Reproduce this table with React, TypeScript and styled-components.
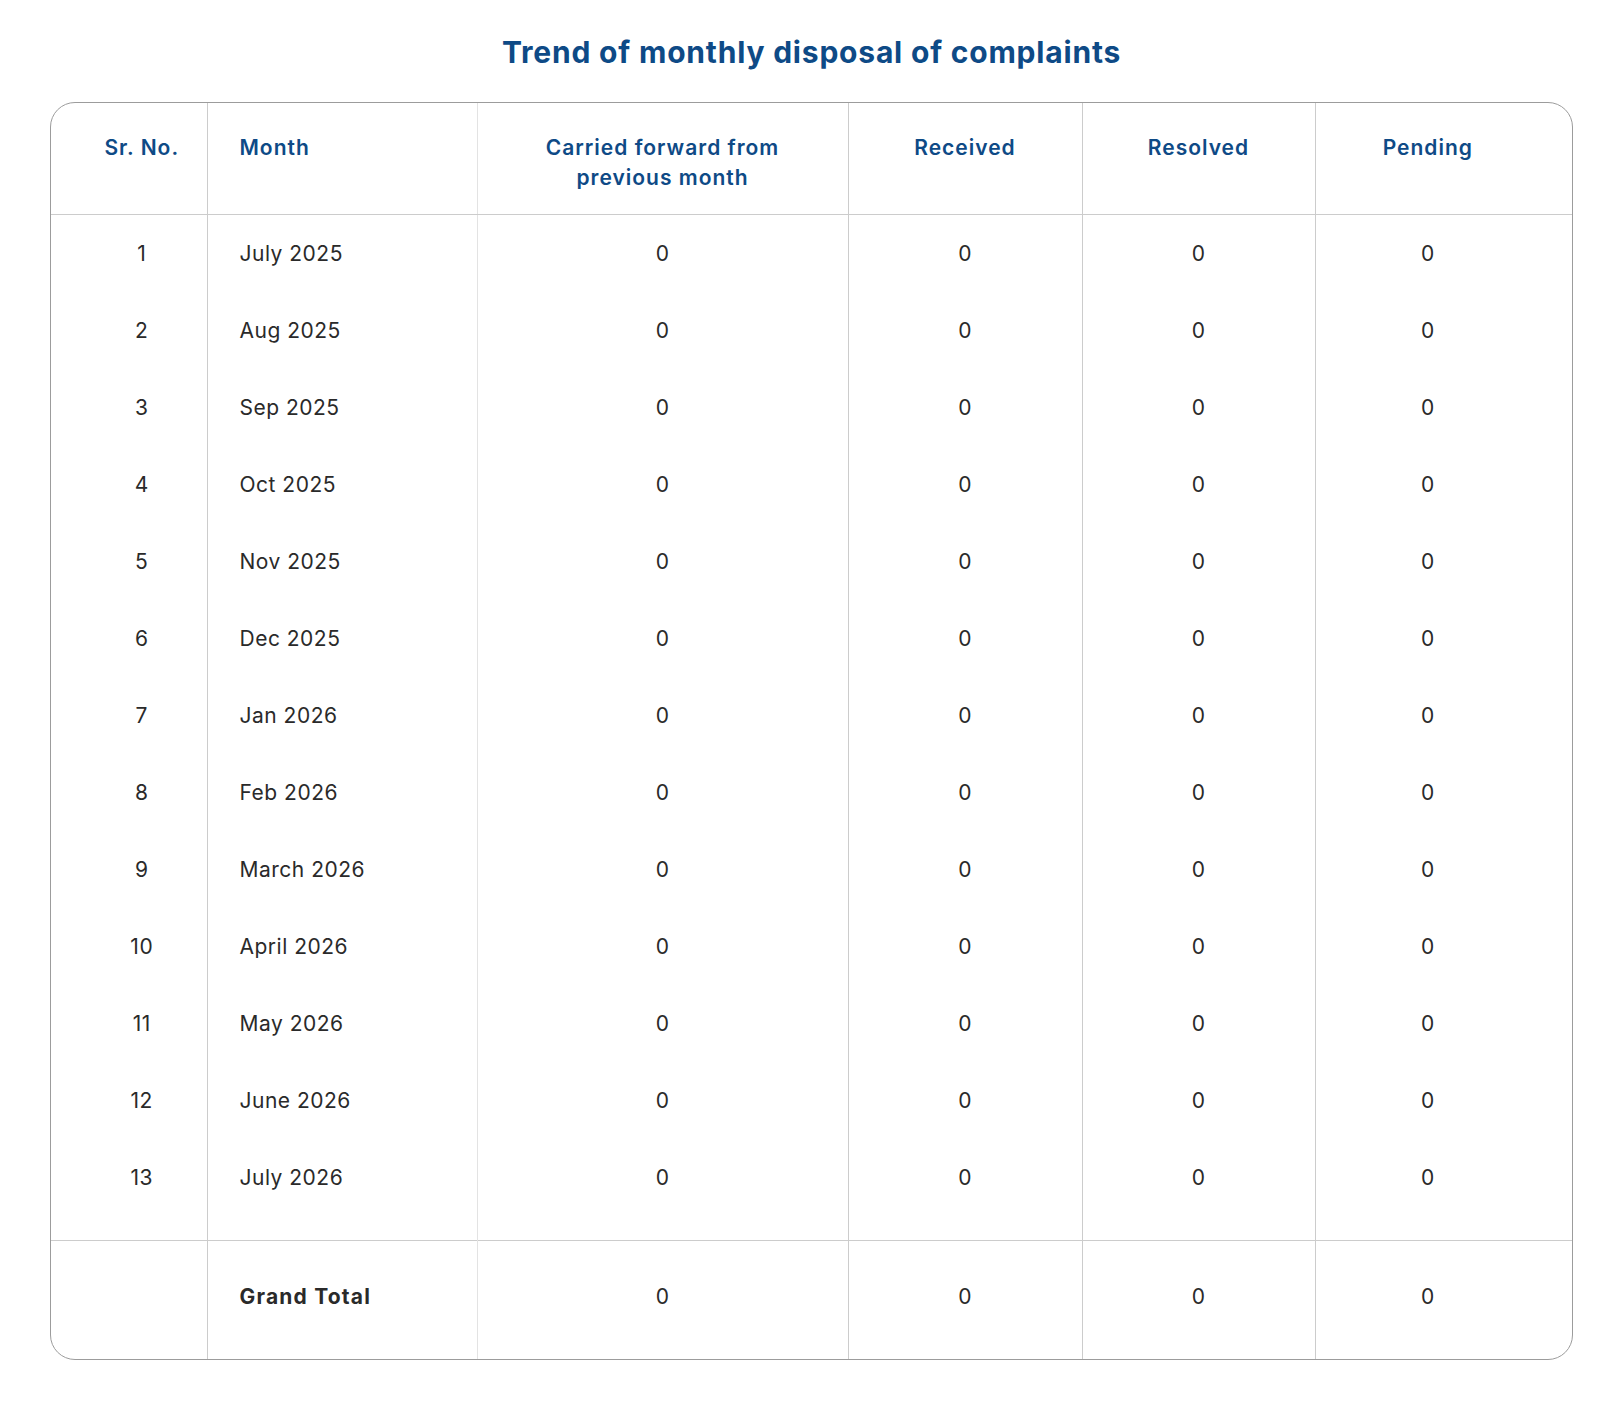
import React from 'react';
import styled, { createGlobalStyle } from 'styled-components';

const GlobalStyle = createGlobalStyle`
  body {
    margin: 0;
    background: #fff;
    font-family: Inter, "Noto Sans", sans-serif;
  }
`;

const Page = styled.div`
  padding: 0 50px 0 50px;
`;

const Title = styled.h2`
  margin: 32px 0 30px;
  font-size: 30px;
  line-height: 40px;
  font-weight: 700;
  letter-spacing: 0.8px;
  text-align: center;
  color: #0e4a86;
`;

const TableFrame = styled.div`
  border: 1px solid #9c9c9c;
  border-radius: 25px;
  overflow: hidden;
`;

const Table = styled.table`
  width: 100%;
  border-collapse: collapse;
  table-layout: fixed;
`;

const HeadCell = styled.th<{ $align?: 'left' | 'center' }>`
  padding: 30px 32px 21px;
  vertical-align: top;
  text-align: ${(p) => p.$align || 'center'};
  font-size: 21px;
  line-height: 30px;
  font-weight: 600;
  letter-spacing: 1px;
  color: #0e4a86;
  border-bottom: 1px solid #cccccc;
  border-left: 1px solid #cccccc;

  &:first-child {
    border-left: none;
    padding-left: 32px;
    padding-right: 6px;
  }
  &:last-child {
    padding-left: 16px;
    padding-right: 48px;
  }
  &:nth-child(3) {
    border-left-color: #e3e3e3;
  }
`;

const Cell = styled.td<{ $align?: 'left' | 'center'; $bold?: boolean }>`
  padding: 27px 32px 26px;
  vertical-align: top;
  text-align: ${(p) => p.$align || 'center'};
  font-size: 21px;
  line-height: 24px;
  font-weight: ${(p) => (p.$bold ? 700 : 400)};
  letter-spacing: ${(p) => (p.$bold ? '1.2px' : '0.5px')};
  color: #2a2a2a;
  border-left: 1px solid #cccccc;
  white-space: nowrap;

  &:first-child {
    border-left: none;
    padding-left: 32px;
    padding-right: 6px;
  }
  &:last-child {
    padding-left: 16px;
    padding-right: 48px;
  }
  &:nth-child(3) {
    border-left-color: #e3e3e3;
  }
`;

const BodyRow = styled.tr<{ $last?: boolean }>`
  ${(p) => (p.$last ? `td { padding-bottom: 50px; }` : '')}
`;

const TotalRow = styled.tr`
  td {
    border-top: 1px solid #cccccc;
    padding-top: 44px;
    padding-bottom: 50px;
  }
`;

const months = [
  'July 2025',
  'Aug 2025',
  'Sep 2025',
  'Oct 2025',
  'Nov 2025',
  'Dec 2025',
  'Jan 2026',
  'Feb 2026',
  'March 2026',
  'April 2026',
  'May 2026',
  'June 2026',
  'July 2026',
];

const rows = months.map((month) => ({ month, carried: 0, received: 0, resolved: 0, pending: 0 }));

export default function App() {
  const total = rows.reduce(
    (acc, r) => ({
      carried: acc.carried + r.carried,
      received: acc.received + r.received,
      resolved: acc.resolved + r.resolved,
      pending: acc.pending + r.pending,
    }),
    { carried: 0, received: 0, resolved: 0, pending: 0 }
  );

  return (
    <Page>
      <GlobalStyle />
      <Title>Trend of monthly disposal of complaints</Title>
      <TableFrame>
        <Table>
          <colgroup>
            <col style={{ width: 156 }} />
            <col style={{ width: 270 }} />
            <col style={{ width: 371 }} />
            <col style={{ width: 234 }} />
            <col style={{ width: 233 }} />
            <col />
          </colgroup>
          <thead>
            <tr>
              <HeadCell>Sr. No.</HeadCell>
              <HeadCell $align="left">Month</HeadCell>
              <HeadCell>
                Carried forward from
                <br />
                previous month
              </HeadCell>
              <HeadCell>Received</HeadCell>
              <HeadCell>Resolved</HeadCell>
              <HeadCell>Pending</HeadCell>
            </tr>
          </thead>
          <tbody>
            {rows.map((r, i) => (
              <BodyRow key={r.month} $last={i === rows.length - 1}>
                <Cell>{i + 1}</Cell>
                <Cell $align="left">{r.month}</Cell>
                <Cell>{r.carried}</Cell>
                <Cell>{r.received}</Cell>
                <Cell>{r.resolved}</Cell>
                <Cell>{r.pending}</Cell>
              </BodyRow>
            ))}
            <TotalRow>
              <Cell />
              <Cell $align="left" $bold>
                Grand Total
              </Cell>
              <Cell>{total.carried}</Cell>
              <Cell>{total.received}</Cell>
              <Cell>{total.resolved}</Cell>
              <Cell>{total.pending}</Cell>
            </TotalRow>
          </tbody>
        </Table>
      </TableFrame>
    </Page>
  );
}
